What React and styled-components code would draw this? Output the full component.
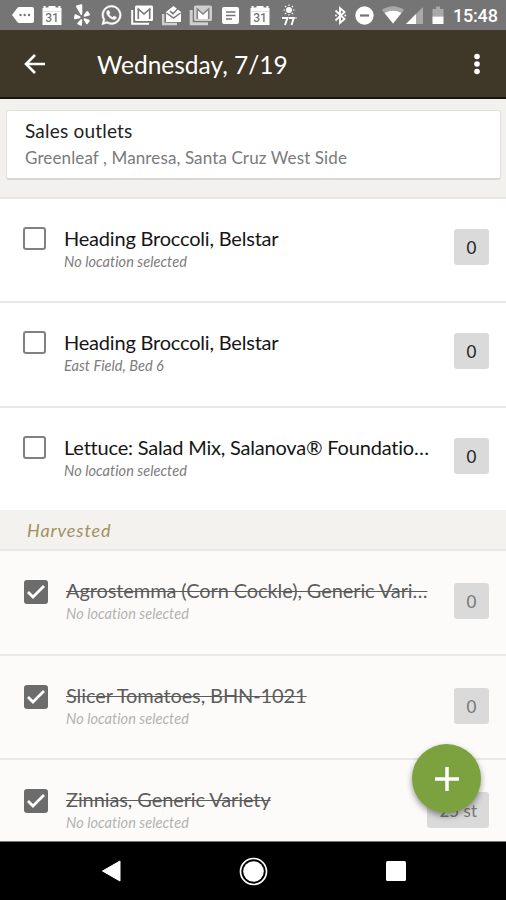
import { useState } from "react";
import styled, { createGlobalStyle } from "styled-components";
import { FaYelp, FaWhatsapp } from "react-icons/fa";

const GlobalStyle = createGlobalStyle`
  * {
    box-sizing: border-box;
  }

  body {
    margin: 0;
    background-color: #000;
    font-family: Lato, "Open Sans", sans-serif;
    font-variant-ligatures: none;
  }
`;

const Screen = styled.div`
  position: relative;
  display: flex;
  flex-direction: column;
  width: 506px;
  height: 900px;
  overflow: hidden;
  background-color: #fcfbf9;
`;

const StatusBar = styled.div`
  display: flex;
  align-items: center;
  height: 30px;
  flex-shrink: 0;
  background-color: #757575;
  color: white;
`;

const StatusIcon = styled.span`
  display: flex;
  width: ${(props) => props.$width}px;
  height: 22px;
  margin-left: ${(props) => props.$gap}px;
  align-items: center;

  svg {
    display: block;
    width: 100%;
    height: 22px;
    overflow: visible;
  }
`;

const Clock = styled.span`
  margin-left: 9px;
  padding-top: 2px;
  font-family: Roboto, sans-serif;
  font-size: 18px;
  font-weight: 500;
  line-height: 22px;
  letter-spacing: -0.2px;
`;

const Header = styled.header`
  display: flex;
  align-items: center;
  height: 69px;
  flex-shrink: 0;
  padding: 0 17px 0 24px;
  background-color: #3f3727;
  border-bottom: 2px solid #17140d;
  color: white;
`;

const IconButton = styled.button`
  display: flex;
  padding: 0;
  border: none;
  background: none;
  color: white;
  cursor: pointer;
`;

const DateTitle = styled.h1`
  flex: 1;
  margin: 2px 0 0 51px;
  font-size: 24.5px;
  font-weight: 400;
  line-height: 32px;
`;

const OutletSection = styled.section`
  height: 100px;
  flex-shrink: 0;
  padding: 11px 5px 0 6px;
  background-color: #f3f1ed;
  border-bottom: 2px solid #e7e6e4;
`;

const OutletCard = styled.div`
  height: 70px;
  padding: 7px 18px;
  border: 1px solid #e2e1de;
  border-bottom: 2px solid #d8d7d4;
  border-radius: 3px;
  background-color: white;
`;

const OutletTitle = styled.div`
  font-size: 19px;
  line-height: 26px;
  letter-spacing: 0.2px;
  color: #222;
`;

const OutletNames = styled.div`
  font-size: 17px;
  line-height: 27px;
  letter-spacing: 0.12px;
  color: #7b7b7b;
`;

const Row = styled.div`
  display: flex;
  align-items: flex-start;
  height: ${(props) => props.$height}px;
  flex-shrink: 0;
  padding: 28px 17px 0 23px;
  background-color: ${(props) => (props.$done ? "#fcfbf9" : "white")};
  border-bottom: ${(props) => (props.$last ? "none" : "2px solid #e9e8e7")};
`;

const CheckBox = styled.button`
  display: flex;
  align-items: center;
  justify-content: center;
  width: ${(props) => (props.$checked ? 24 : 23)}px;
  height: ${(props) => (props.$checked ? 24 : 23)}px;
  margin: ${(props) => (props.$checked ? "1px 0 0 1px" : "0")};
  padding: 0;
  flex-shrink: 0;
  border: ${(props) => (props.$checked ? "none" : "2px solid #808080")};
  border-radius: 3px;
  background-color: ${(props) => (props.$checked ? "#6c6c6c" : "white")};
  cursor: pointer;
`;

const CropInfo = styled.div`
  flex: 1;
  min-width: 0;
  margin: -1px 0 0 18px;
`;

const CropName = styled.div`
  font-size: 20px;
  line-height: 25px;
  letter-spacing: ${(props) => (props.$done ? "-0.1px" : "-0.2px")};
  white-space: nowrap;
  color: ${(props) => (props.$done ? "#5c5c5c" : "#161616")};

  span {
    text-decoration: ${(props) => (props.$done ? "line-through" : "none")};
    text-decoration-thickness: 1px;
  }
`;

const Location = styled.div`
  font-size: 14.5px;
  font-style: italic;
  line-height: 21px;
  letter-spacing: 0.05px;
  color: ${(props) => (props.$done ? "#b3b2b1" : "#7c7c7c")};
`;

const Amount = styled.div`
  display: flex;
  align-items: center;
  justify-content: center;
  min-width: 35px;
  height: 36px;
  margin-top: ${(props) => (props.$done ? 4 : 2)}px;
  padding: 0 12px;
  border-radius: 3px;
  background-color: #dadada;
  font-size: 17px;
  color: ${(props) => (props.$done ? "#777" : "#222")};
`;

const GroupHeading = styled.h2`
  display: flex;
  align-items: center;
  height: 41px;
  margin: 0;
  flex-shrink: 0;
  padding-left: 27px;
  background-color: #f3f2ee;
  border-bottom: 2px solid #e9e8e6;
  font-size: 18px;
  font-style: italic;
  font-weight: 400;
  letter-spacing: 0.9px;
  color: #a3905f;
`;

const AddButton = styled.button`
  position: absolute;
  right: 25px;
  bottom: 87px;
  display: flex;
  align-items: center;
  justify-content: center;
  width: 69px;
  height: 69px;
  padding: 0;
  border: none;
  border-radius: 50%;
  background-color: #7ba23f;
  box-shadow: 0 3px 6px rgba(0, 0, 0, 0.4);
  cursor: pointer;
`;

const NavBar = styled.nav`
  display: flex;
  align-items: center;
  height: 59px;
  flex-shrink: 0;
  padding: 0 100px 0 101px;
  justify-content: space-between;
  background-color: black;
  border-top: 1px solid #777;
`;

const CalendarIcon = () => (
  <svg viewBox="0 0 20 22">
    <path d="M1.500 2h2v1.500h3V2h7v1.500h3V2h2v2h1v17H.5V4h1z" fill="white" />
    <path d="M1 7.500h18" stroke="#d8d8d8" strokeWidth="0.800" />
    <text x="10" y="18" textAnchor="middle" fontFamily="Roboto, sans-serif" fontSize="12" fontWeight="500" fill="#757575">
      31
    </text>
  </svg>
);

const MailStackIcon = ({ soft }) => (
  <svg viewBox="0 0 22 22">
    <path d="M1.200 6v13.800H18" fill="none" stroke={soft ? "#d0d0d0" : "white"} strokeWidth={soft ? 3 : 2} />
    <rect x="4" y="1.500" width="18" height="15.500" rx="1.500" fill={soft ? "#cfcfcf" : "white"} />
    {soft && <path d="M7 5l6 5 6-5v10H7z" fill="white" />}
    <path d="M7.300 15V5l5.700 5 5.700-5v10" fill="none" stroke={soft ? "#858585" : "#757575"} strokeWidth="1.600" />
  </svg>
);

const OpenMailIcon = () => (
  <svg viewBox="0 0 20 22">
    <path d="M1.200 10v10H15" fill="none" stroke="#d0d0d0" strokeWidth="2.400" />
    <path d="M4 8L11.500 2 19 8v10H4z" fill="white" />
    <path d="M4.500 9l7 5 7-5" fill="none" stroke="#757575" strokeWidth="1.500" />
    <path d="M8 7.200l3 2.500 4.500-4.700" fill="none" stroke="#757575" strokeWidth="1.500" />
  </svg>
);

const StatusIcons = () => (
  <>
    <StatusIcon $width={22} $gap={12}>
      <svg viewBox="0 0 22 22">
        <path d="M0 11l5.500-7.200Q6.200 3 7.200 3H20q2 0 2 2v12q0 2-2 2H7.200q-1 0-1.700-.8z" fill="white" />
        <circle cx="8.500" cy="11" r="1.200" fill="#757575" />
        <circle cx="12.700" cy="11" r="1.200" fill="#757575" />
        <circle cx="17" cy="11" r="1.200" fill="#757575" />
      </svg>
    </StatusIcon>
    <StatusIcon $width={20} $gap={8}>
      <CalendarIcon />
    </StatusIcon>
    <StatusIcon $width={16} $gap={12}>
      <FaYelp />
    </StatusIcon>
    <StatusIcon $width={21} $gap={11}>
      <FaWhatsapp stroke="white" strokeWidth="12" />
    </StatusIcon>
    <StatusIcon $width={22} $gap={9}>
      <MailStackIcon />
    </StatusIcon>
    <StatusIcon $width={20} $gap={9}>
      <OpenMailIcon />
    </StatusIcon>
    <StatusIcon $width={22} $gap={8}>
      <MailStackIcon soft />
    </StatusIcon>
    <StatusIcon $width={17} $gap={10}>
      <svg viewBox="0 0 17 22">
        <rect y="3" width="17" height="17" rx="2" fill="white" />
        <path d="M4 8h9.500M4 11.500h9.500M4 15h6" stroke="#757575" strokeWidth="1.700" />
      </svg>
    </StatusIcon>
    <StatusIcon $width={20} $gap={11}>
      <CalendarIcon />
    </StatusIcon>
    <StatusIcon $width={15} $gap={12}>
      <svg viewBox="0 0 15 22">
        <circle cx="7" cy="6" r="3" fill="white" />
        <path d="M7 .5v1.500M7 10v1.500M1.500 6H3M11 6h1.500M3 2l1.200 1.200M11 2L9.800 3.200M3 10l1.200-1.200M11 10L9.800 8.800" stroke="white" strokeWidth="1.100" />
        <path d="M0 14h5.500l-2.500 7M7 14h4.800L9.500 21" fill="none" stroke="white" strokeWidth="1.900" />
        <circle cx="14" cy="14" r=".8" fill="white" />
      </svg>
    </StatusIcon>
    <StatusIcon $width={11} $gap={38}>
      <svg viewBox="0 0 11 22">
        <path d="M.5 6.500l9 8.500L5 19V4l4.500 4-9 8.500" fill="none" stroke="white" strokeWidth="1.900" />
        <circle cx="1" cy="11.500" r="1" fill="white" />
        <circle cx="10.300" cy="11.500" r="1" fill="white" />
      </svg>
    </StatusIcon>
    <StatusIcon $width={19} $gap={9}>
      <svg viewBox="0 0 19 22">
        <circle cx="9.500" cy="11.500" r="9.200" fill="white" />
        <path d="M5 11.500h9" stroke="#757575" strokeWidth="2.200" />
      </svg>
    </StatusIcon>
    <StatusIcon $width={22} $gap={8}>
      <svg viewBox="0 0 22 22">
        <path d="M11 19.500L0 6q11-7.500 22 0z" fill="#a9a9a9" />
        <path d="M11 19.500L2.600 9Q11 4.500 19.400 9z" fill="white" />
      </svg>
    </StatusIcon>
    <StatusIcon $width={18} $gap={1}>
      <svg viewBox="0 0 18 22">
        <path d="M18 3v17H1z" fill="#a9a9a9" />
        <path d="M11 10v10H1z" fill="white" />
      </svg>
    </StatusIcon>
    <StatusIcon $width={12} $gap={9}>
      <svg viewBox="0 0 12 22">
        <path d="M.5 5H4V2.500h4V5h3.500v7.500H.5z" fill="#a9a9a9" />
        <path d="M.5 12.500h11V20H.5z" fill="white" />
      </svg>
    </StatusIcon>
  </>
);

const outlets = "Greenleaf , Manresa, Santa Cruz West Side";

const initialCrops = [
  { id: 1, name: "Heading Broccoli, Belstar", location: "No location selected", amount: "0", height: 104 },
  { id: 2, name: "Heading Broccoli, Belstar", location: "East Field, Bed 6", amount: "0", height: 105 },
  { id: 3, name: "Lettuce: Salad Mix, Salanova® Foundatio…", location: "No location selected", amount: "0", height: 102, last: true },
];

const initialHarvested = [
  { id: 4, name: "Agrostemma (Corn Cockle), Generic Vari…", location: "No location selected", amount: "0", height: 105 },
  { id: 5, name: "Slicer Tomatoes, BHN-1021", location: "No location selected", amount: "0", height: 104 },
  { id: 6, name: "Zinnias, Generic Variety", location: "No location selected", amount: "25 st", height: 81, last: true },
];

function CropRow({ crop, done }) {
  const [checked, setChecked] = useState(done);

  return (
    <Row $height={crop.height} $done={done} $last={crop.last}>
      <CheckBox $checked={checked} onClick={() => setChecked((prev) => !prev)}>
        {checked && (
          <svg width="20" height="16" viewBox="0 0 20 16">
            <path d="M2 8l5 5L18 2" fill="none" stroke="white" strokeWidth="2.800" />
          </svg>
        )}
      </CheckBox>
      <CropInfo>
        <CropName $done={done}>
          <span>{crop.name}</span>
        </CropName>
        <Location $done={done}>{crop.location}</Location>
      </CropInfo>
      <Amount $done={done}>{crop.amount}</Amount>
    </Row>
  );
}

export default function App() {
  return (
    <Screen>
      <GlobalStyle />
      <StatusBar>
        <StatusIcons />
        <Clock>15:48</Clock>
      </StatusBar>
      <Header>
        <IconButton>
          <svg width="22" height="22" viewBox="0 0 22 22">
            <path d="M11 2L2 11l9 9M2 11h19" fill="none" stroke="white" strokeWidth="2.600" />
          </svg>
        </IconButton>
        <DateTitle>Wednesday, 7/19</DateTitle>
        <IconButton>
          <svg width="24" height="24" viewBox="0 0 24 24" fill="white">
            <circle cx="12" cy="4.500" r="2.800" />
            <circle cx="12" cy="12" r="2.800" />
            <circle cx="12" cy="19.500" r="2.800" />
          </svg>
        </IconButton>
      </Header>
      <OutletSection>
        <OutletCard>
          <OutletTitle>Sales outlets</OutletTitle>
          <OutletNames>{outlets}</OutletNames>
        </OutletCard>
      </OutletSection>
      {initialCrops.map((crop) => (
        <CropRow key={crop.id} crop={crop} done={false} />
      ))}
      <GroupHeading>Harvested</GroupHeading>
      {initialHarvested.map((crop) => (
        <CropRow key={crop.id} crop={crop} done />
      ))}
      <NavBar>
        <svg width="20" height="22" viewBox="0 0 20 22">
          <path d="M19 1v20L1.500 11z" fill="white" stroke="white" strokeLinejoin="round" />
        </svg>
        <svg width="29" height="29" viewBox="0 0 29 29">
          <circle cx="14.500" cy="14.500" r="13" fill="none" stroke="white" strokeWidth="1.700" />
          <circle cx="14.500" cy="14.500" r="10.300" fill="white" />
        </svg>
        <svg width="20" height="20" viewBox="0 0 20 20">
          <rect width="20" height="20" rx="1.500" fill="white" />
        </svg>
      </NavBar>
      <AddButton>
        <svg width="24" height="24" viewBox="0 0 24 24">
          <path d="M12 0v24M0 12h24" stroke="white" strokeWidth="3.500" />
        </svg>
      </AddButton>
    </Screen>
  );
}
